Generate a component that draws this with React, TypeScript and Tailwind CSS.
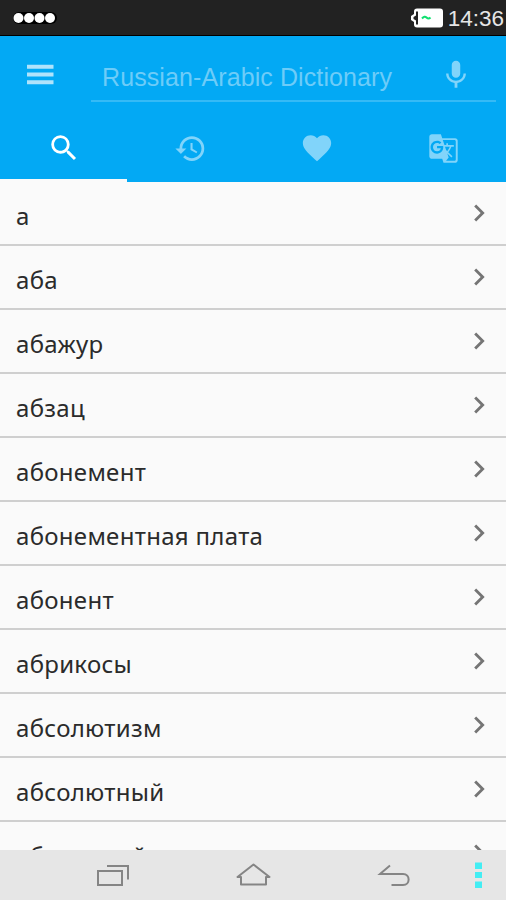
import { useState } from "react";
import {
  MdChevronRight,
  MdFavorite,
  MdGTranslate,
  MdHistory,
  MdMic,
  MdSearch,
} from "react-icons/md";

const words = [
  "а",
  "аба",
  "абажур",
  "абзац",
  "абонемент",
  "абонементная плата",
  "абонент",
  "абрикосы",
  "абсолютизм",
  "абсолютный",
  "абсурдный",
];

const tabs = [
  { id: "search", Icon: MdSearch, size: "size-[34px]" },
  { id: "history", Icon: MdHistory, size: "size-[33px]" },
  { id: "favorites", Icon: MdFavorite, size: "size-[34px]" },
  { id: "translate", Icon: MdGTranslate, size: "size-[31px] ml-0.5" },
];

function StatusBar() {
  return (
    <div className="flex h-9 shrink-0 items-center justify-between border-b border-black bg-[#222222] pl-[13px] pr-0.5">
      <svg width="44" height="14" viewBox="0 0 44 14">
        <rect x="0" y="1" width="44" height="12" rx="6" fill="#000" />
        {[5.5, 16, 26.5, 37].map((cx) => (
          <circle key={cx} cx={cx} cy="7" r="5" fill="#fff" />
        ))}
      </svg>
      <div className="flex items-center gap-1">
        <svg width="34" height="22" viewBox="0 0 34 22">
          <rect x="4" y="1.500" width="29" height="19" rx="3" fill="#fff" />
          <path d="M4 7L1 9V13L4 15Z" fill="#fff" />
          <path d="M6 4.500H8V17.500H6V13.500L3.500 12V10L6 8.500Z" fill="#222" />
          <path
            d="M12 11.500Q14.500 8.500 16.500 10.500T20.500 10.500"
            fill="none"
            stroke="#10e070"
            strokeWidth="2"
          />
        </svg>
        <span className="pt-[3px] text-[22.500px] leading-none text-[#e6e6e6]">
          14:36
        </span>
      </div>
    </div>
  );
}

function SearchHeader() {
  return (
    <div className="flex h-[83px] shrink-0 pl-[27px] pr-2.5">
      <svg className="mt-7 text-[#b0e3fb]" width="27" height="22" viewBox="0 0 27 22">
        <path
          d="M0 2.700H26.500M0 10.500H26.500M0 18.200H26.500"
          stroke="currentColor"
          strokeWidth="4"
        />
      </svg>
      <div className="ml-[37px] flex h-[66px] flex-1 items-center justify-between border-b-2 border-[#35baf6] pl-[11px] pr-[23px] pt-3">
        <span className="whitespace-nowrap pt-1.5 text-[25px] leading-none tracking-[0.1px] text-[#6dccf8]">
          Russian-Arabic Dictionary
        </span>
        <MdMic className="mt-px size-[34px] text-[#81d4fa]" />
      </div>
    </div>
  );
}

function NavigationBar() {
  return (
    <div className="flex h-[50px] shrink-0 items-center bg-[#e6e6e6] text-[#858585]">
      <svg className="ml-24" width="36" height="28" viewBox="0 0 36 28" fill="none" stroke="currentColor" strokeWidth="2">
        <rect x="2" y="10" width="24" height="14" />
        <path d="M11 5H32V18.500" />
      </svg>
      <svg className="ml-[103px]" width="38" height="28" viewBox="0 0 38 28" fill="none" stroke="currentColor" strokeWidth="2">
        <path d="M6 16H2.500L18.500 3.500L34.500 16H31V23.500H6Z" strokeLinejoin="round" />
      </svg>
      <svg className="ml-[104px]" width="36" height="28" viewBox="0 0 36 28" fill="none" stroke="currentColor" strokeWidth="2">
        <path d="M13 4.500L3 13H26C33.500 13 33.500 24 26 24H14.500" />
      </svg>
      <svg className="ml-[61px]" width="8" height="28" viewBox="0 0 8 28" fill="#44edf3">
        <rect x="1" y="1.500" width="7" height="6.500" />
        <rect x="1" y="11" width="7" height="6" />
        <rect x="1" y="20.500" width="7" height="6.500" />
      </svg>
    </div>
  );
}

export default function App() {
  const [active, setActive] = useState("search");

  return (
    <div className="flex h-[900px] w-[506px] flex-col overflow-hidden bg-[#fafafa] font-['Liberation_Sans',Arial,sans-serif]">
      <StatusBar />
      <header className="flex h-[146px] shrink-0 flex-col bg-[#03a9f4]">
        <SearchHeader />
        <nav className="grid flex-1 grid-cols-4 pl-px">
          {tabs.map(({ id, Icon, size }) => (
            <button
              key={id}
              onClick={() => setActive(id)}
              className={`-ml-px flex items-center justify-center border-b-3 pl-px ${
                active === id
                  ? "border-[#fafafa] text-white"
                  : "border-transparent text-[#81d4fa]"
              }`}
            >
              <Icon className={`mb-0.5 ${size}`} />
            </button>
          ))}
        </nav>
      </header>

      <ul className="min-h-0 flex-1 overflow-hidden font-['Noto_Sans','Open_Sans',sans-serif]">
        {words.map((word) => (
          <li
            key={word}
            className="flex h-16 items-start justify-between border-b-2 border-[#cfcfcf] pl-4 pr-[10px]"
          >
            <span className="pt-[17px] text-[24px] leading-[34px] tracking-[0.3px] text-[#2b2b2b]">
              {word}
            </span>
            <MdChevronRight className="mt-[14px] size-[34px] text-[#757575]" />
          </li>
        ))}
      </ul>
      <NavigationBar />
    </div>
  );
}
